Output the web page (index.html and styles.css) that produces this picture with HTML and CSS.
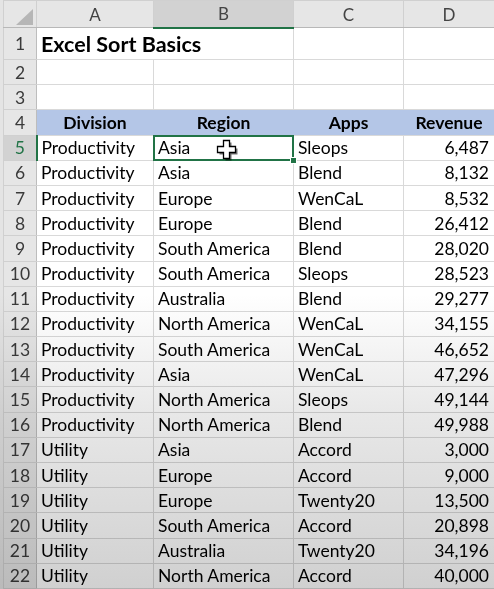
FILE: index.html
```html
<!DOCTYPE html>
<html>
  <head>
    <title>Excel Sort Basics</title>
    <link rel="stylesheet" href="styles.css">
  </head>
  <body>
    <div class="sheet">
      <table class="grid">
        <colgroup>
          <col class="c-rh" />
          <col class="c-a" />
          <col class="c-b" />
          <col class="c-c" />
          <col class="c-d" />
        </colgroup>
        <!-- column letters -->
        <tr class="col-head">
          <th class="corner"><span class="tri"></span></th>
          <th>A</th>
          <th class="active">B</th>
          <th>C</th>
          <th class="last">D</th>
        </tr>
        <tr class="r-title">
          <th class="rh">1</th>
          <td class="title no-r">Excel Sort Basics</td>
          <td class="no-l"></td>
          <td></td>
          <td class="last"></td>
        </tr>
        <tr><th class="rh">2</th><td></td><td></td><td></td><td class="last"></td></tr>
        <tr><th class="rh">3</th><td></td><td></td><td></td><td class="last"></td></tr>
        <tr class="t-head">
          <th class="rh">4</th>
          <td>Division</td>
          <td>Region</td>
          <td>Apps</td>
          <td class="last">Revenue</td>
        </tr>
        <tr>
          <th class="rh active">5</th>
          <td>Productivity</td>
          <td class="sel">Asia</td>
          <td>Sleops</td>
          <td class="num">6,487</td>
        </tr>
        <tr><th class="rh">6</th><td>Productivity</td><td>Asia</td><td>Blend</td><td class="num">8,132</td></tr>
        <tr><th class="rh">7</th><td>Productivity</td><td>Europe</td><td>WenCaL</td><td class="num">8,532</td></tr>
        <tr><th class="rh">8</th><td>Productivity</td><td>Europe</td><td>Blend</td><td class="num">26,412</td></tr>
        <tr><th class="rh">9</th><td>Productivity</td><td>South America</td><td>Blend</td><td class="num">28,020</td></tr>
        <tr><th class="rh">10</th><td>Productivity</td><td>South America</td><td>Sleops</td><td class="num">28,523</td></tr>
        <tr><th class="rh">11</th><td>Productivity</td><td>Australia</td><td>Blend</td><td class="num">29,277</td></tr>
        <tr><th class="rh">12</th><td>Productivity</td><td>North America</td><td>WenCaL</td><td class="num">34,155</td></tr>
        <tr><th class="rh">13</th><td>Productivity</td><td>South America</td><td>WenCaL</td><td class="num">46,652</td></tr>
        <tr><th class="rh">14</th><td>Productivity</td><td>Asia</td><td>WenCaL</td><td class="num">47,296</td></tr>
        <tr><th class="rh">15</th><td>Productivity</td><td>North America</td><td>Sleops</td><td class="num">49,144</td></tr>
        <tr><th class="rh">16</th><td>Productivity</td><td>North America</td><td>Blend</td><td class="num">49,988</td></tr>
        <tr><th class="rh">17</th><td>Utility</td><td>Asia</td><td>Accord</td><td class="num">3,000</td></tr>
        <tr><th class="rh">18</th><td>Utility</td><td>Europe</td><td>Accord</td><td class="num">9,000</td></tr>
        <tr><th class="rh">19</th><td>Utility</td><td>Europe</td><td>Twenty20</td><td class="num">13,500</td></tr>
        <tr><th class="rh">20</th><td>Utility</td><td>South America</td><td>Accord</td><td class="num">20,898</td></tr>
        <tr><th class="rh">21</th><td>Utility</td><td>Australia</td><td>Twenty20</td><td class="num">34,196</td></tr>
        <tr><th class="rh">22</th><td>Utility</td><td>North America</td><td>Accord</td><td class="num">40,000</td></tr>
      </table>

      <!-- mouse pointer over B5 -->
      <svg class="cursor" width="22" height="22" viewBox="0 0 22 22">
        <path d="M8.5 2.5h6v6h6v6h-6v6h-6v-6h-6v-6h6z" fill="#000" opacity="0.55" transform="translate(1 1)" />
        <path d="M7.5 1.5h6v6h6v6h-6v6h-6v-6h-6v-6h6z" fill="#fff" stroke="#000" stroke-width="1.3" />
      </svg>

      <div class="shade"></div>
    </div>
  </body>
</html>
```

FILE: styles.css
```css
html,
body {
  margin: 0;
  padding: 0;
  background: #e4e4e4;
}
body {
  font-family: Lato, "Open Sans", sans-serif;
  width: 494px;
  height: 589px;
  overflow: hidden;
}
.sheet {
  position: relative;
  padding-left: 3px;
  height: 589px;
  overflow: hidden;
}
.grid {
  border-collapse: collapse;
  table-layout: fixed;
  width: 491px;
  background: white;
  border-left: 1px solid #9c9c9c;
}
.c-rh {
  width: 33px;
}
.c-a {
  width: 117px;
}
.c-b {
  width: 140px;
}
.c-c {
  width: 110px;
}
.c-d {
  width: 91px;
}
td,
th {
  padding: 0 4px;
  height: 25.2px;
  border: 1px solid #d9d9d9;
  font-size: 17.5px;
  font-weight: normal;
  color: #000;
  white-space: nowrap;
  overflow: visible;
  text-align: left;
  box-sizing: border-box;
}
td.last,
th.last,
td.num {
  border-right-color: transparent;
}
/* column letters */
.col-head th {
  height: 27px;
  background: #e6e6e6;
  color: #444;
  font-size: 17px;
  text-align: center;
  border-color: #d0d0d0;
  border-bottom-color: #b8b8b8;
}
.col-head th.active {
  background: #d2d2d2;
  border-bottom: 2px solid #217346;
}
.corner {
  position: relative;
}
.tri {
  position: absolute;
  right: 3px;
  bottom: 2px;
  width: 0;
  height: 0;
  border-left: 17px solid transparent;
  border-bottom: 16px solid #b6b6b6;
}
/* row numbers */
.rh {
  background: #e6e6e6;
  color: #3a3a3a;
  text-align: center;
  padding: 0;
  border-color: #d0d0d0;
  border-right-color: #bdbdbd;
}
.rh.active {
  background: #d2d2d2;
  color: #217346;
  border-right: 2px solid #217346;
}
.r-title td {
  height: 32px;
}
.title {
  font-size: 21.5px;
  font-weight: bold;
  color: #000;
}
.no-r {
  border-right-color: white;
}
.no-l {
  border-left-color: white;
}
.t-head td {
  background: #b4c6e7;
  font-weight: bold;
  text-align: center;
  border-top: 1px solid #2f3a4c;
  border-left-color: #b4c6e7;
  border-right-color: #b4c6e7;
}
.num {
  text-align: right;
  padding-right: 5px;
}
.sel {
  position: relative;
}
.sel::after {
  content: "";
  position: absolute;
  left: -1px;
  top: -1px;
  right: -1px;
  bottom: -1px;
  border: 2px solid #217346;
}
.sel::before {
  content: "";
  position: absolute;
  right: -4px;
  bottom: -4px;
  width: 5px;
  height: 5px;
  background: #217346;
  border: 1px solid white;
  z-index: 2;
}
.cursor {
  position: absolute;
  left: 216px;
  top: 139px;
}
/* video-style darkening toward the bottom */
.shade {
  position: absolute;
  left: 0;
  top: 0;
  right: 0;
  bottom: 0;
  pointer-events: none;
  mix-blend-mode: multiply;
  background: linear-gradient(to bottom, #fff 0%, #fff 50%, #e8e8e8 70%, #d0d0d0 100%);
}
```
